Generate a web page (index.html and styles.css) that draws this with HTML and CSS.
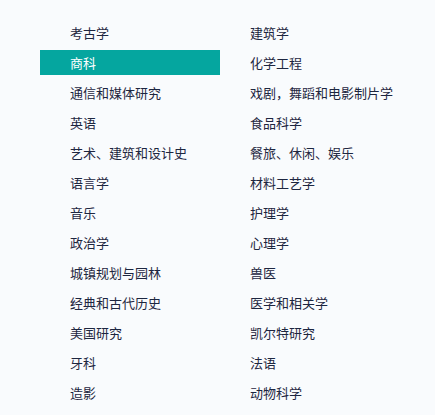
FILE: index.html
```html
<!DOCTYPE html>
<html lang="zh-CN">
<head>
<meta charset="utf-8">
<link rel="stylesheet" href="styles.css">
</head>
<body>
<div class="subjects">
  <ul class="col">
    <li class="item">考古学</li>
    <li class="item active">商科</li>
    <li class="item">通信和媒体研究</li>
    <li class="item">英语</li>
    <li class="item">艺术、建筑和设计史</li>
    <li class="item">语言学</li>
    <li class="item">音乐</li>
    <li class="item">政治学</li>
    <li class="item">城镇规划与园林</li>
    <li class="item">经典和古代历史</li>
    <li class="item">美国研究</li>
    <li class="item">牙科</li>
    <li class="item">造影</li>
  </ul>
  <ul class="col">
    <li class="item">建筑学</li>
    <li class="item">化学工程</li>
    <li class="item">戏剧，舞蹈和电影制片学</li>
    <li class="item">食品科学</li>
    <li class="item">餐旅、休闲、娱乐</li>
    <li class="item">材料工艺学</li>
    <li class="item">护理学</li>
    <li class="item">心理学</li>
    <li class="item">兽医</li>
    <li class="item">医学和相关学</li>
    <li class="item">凯尔特研究</li>
    <li class="item">法语</li>
    <li class="item">动物科学</li>
  </ul>
</div>
</body>
</html>
```
FILE: styles.css
```css
html, body {
  margin: 0;
  padding: 0;
  background: #f9fbfd;
}
body {
  font-family: "Noto Sans CJK SC", "Noto Sans", sans-serif;
  font-size: 13px;
  color: #1d2640;
}
.subjects {
  display: flex;
  padding: 20px 0 0 40px;
}
.col {
  list-style: none;
  margin: 0;
  padding: 0;
  width: 180px;
}
.item {
  height: 25px;
  line-height: 25px;
  padding-left: 30px;
  margin-bottom: 5px;
  white-space: nowrap;
}
.item.active {
  background: #05a69f;
  color: #ffffff;
}
```
